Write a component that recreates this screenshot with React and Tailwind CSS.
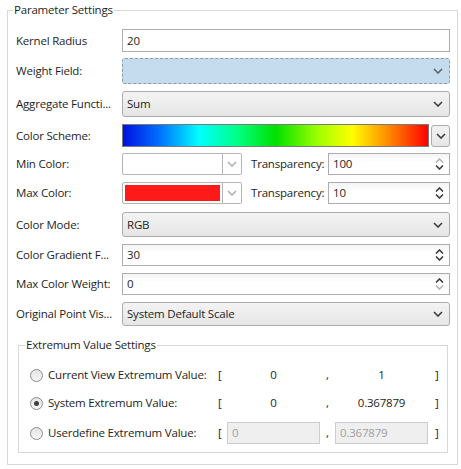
import React from 'react';

const font = { fontFamily: '"Open Sans", "Noto Sans", sans-serif' };

function Chevron({ className = 'text-[#3c3c3c]' }) {
  return (
    <svg width="10" height="6" viewBox="0 0 10 6" className={className}>
      <path d="M1 1 L5 5 L9 1" fill="none" stroke="currentColor" strokeWidth="1.6" />
    </svg>
  );
}

function SpinArrows({ upOff = false, downOff = false }) {
  return (
    <div className="flex flex-col items-center gap-[2px]">
      <svg width="9" height="5" viewBox="0 0 9 5" className={upOff ? 'text-[#b4b4b4]' : 'text-[#3c3c3c]'}>
        <path d="M1 4.5 L4.5 1 L8 4.5" fill="none" stroke="currentColor" strokeWidth="1.6" />
      </svg>
      <svg width="9" height="5" viewBox="0 0 9 5" className={downOff ? 'text-[#b4b4b4]' : 'text-[#3c3c3c]'}>
        <path d="M1 0.5 L4.5 4 L8 0.5" fill="none" stroke="currentColor" strokeWidth="1.6" />
      </svg>
    </div>
  );
}

function Row({ label, mt, h, children }) {
  return (
    <div className="flex items-center" style={{ marginTop: mt, height: h }}>
      <span className="w-[106px] shrink-0 whitespace-nowrap overflow-hidden text-[#1e1e1e]">{label}</span>
      <div className="flex-1 h-full flex items-center">{children}</div>
    </div>
  );
}

function TextBox({ value }) {
  return (
    <div className="w-full h-full border border-[#abadb3] bg-white flex items-center pl-[4px]">{value}</div>
  );
}

function Combo({ value, focused }) {
  return (
    <div
      className={
        focused
          ? 'w-full h-full rounded-[3px] border border-dashed border-[#8d9aa8] bg-[#c5dcee] flex items-center justify-between pl-[4px] pr-[6px]'
          : 'w-full h-full rounded-[3px] border border-[#acacac] bg-gradient-to-b from-[#f3f3f3] to-[#e6e6e6] flex items-center justify-between pl-[4px] pr-[6px]'
      }
    >
      <span>{value}</span>
      <Chevron className={focused ? 'text-[#5a6470]' : 'text-[#3c3c3c]'} />
    </div>
  );
}

function SpinBox({ value, upOff, downOff, className = 'w-full' }) {
  return (
    <div className={`${className} h-full border border-[#abadb3] bg-gradient-to-b from-[#f4f4f4] to-white to-[40%] flex items-center justify-between pl-[4px] pr-[5px]`}>
      <span>{value}</span>
      <SpinArrows upOff={upOff} downOff={downOff} />
    </div>
  );
}

function ColorPick({ color }) {
  return (
    <div className="flex h-full">
      <div className="w-[101px] h-full border border-[#b4b4b4] rounded-l-[2px] bg-white p-[2px]">
        <div className="w-full h-full" style={{ background: color }} />
      </div>
      <div className="w-[19px] h-full border border-l-0 border-[#b4b4b4] rounded-r-[2px] bg-white flex items-center justify-center">
        <Chevron className="text-[#b0b0b0]" />
      </div>
    </div>
  );
}

function Radio({ checked }) {
  return (
    <div className="w-[13px] h-[13px] rounded-full border border-[#8c8c8c] bg-gradient-to-b from-[#e4e4e4] to-[#f6f6f6] flex items-center justify-center">
      {checked && <div className="w-[5px] h-[5px] rounded-full bg-[#404040]" />}
    </div>
  );
}

function ExtRow({ label, checked, a, b, mt, disabled }) {
  return (
    <div className="flex items-center h-[22px]" style={{ marginTop: mt }}>
      <div className="w-[11px]" />
      <Radio checked={checked} />
      <span className="ml-[5px] w-[170px] whitespace-nowrap text-[#1e1e1e]">{label}</span>
      <span className="w-[9px] text-[#1e1e1e]">[</span>
      {disabled ? (
        <div className="w-[93px] h-full border border-[#cccccc] bg-[#efefef] text-[#a0a0a0] flex items-center pl-[4px]">{a}</div>
      ) : (
        <div className="w-[93px] text-center text-[#1e1e1e]">{a}</div>
      )}
      <span className="w-[15px] text-center text-[#1e1e1e]">,</span>
      {disabled ? (
        <div className="w-[93px] h-full border border-[#cccccc] bg-[#efefef] text-[#a0a0a0] flex items-center pl-[4px]">{b}</div>
      ) : (
        <div className="w-[93px] text-center text-[#1e1e1e]">{b}</div>
      )}
      <span className="ml-[7px] text-[#1e1e1e]">]</span>
    </div>
  );
}

export default function App() {
  return (
    <div className="w-[461px] h-[469px] bg-white text-[11.5px] tracking-[-0.2px] text-[#1e1e1e] overflow-hidden" style={font}>
      <div className="relative mt-[10px] ml-[7px] w-[451px] h-[455px] border border-[#d5d9dc] pl-[8px] pr-[7px] pt-[18px]">
        <span className="absolute -top-[10px] left-[5px] bg-white px-[1px] leading-[18px]">Parameter Settings</span>

        <Row label="Kernel Radius" mt={0} h={23}>
          <TextBox value="20" />
        </Row>
        <Row label="Weight Field:" mt={6} h={26}>
          <Combo value="" focused />
        </Row>
        <Row label="Aggregate Functi..." mt={7} h={26}>
          <Combo value="Sum" />
        </Row>
        <Row label="Color Scheme:" mt={7} h={23}>
          <div className="flex w-full h-full items-center gap-[2px]">
            <div className="flex-1 h-full border border-[#7a7a7a] bg-[linear-gradient(to_right,#0010e0_0%,#0070ff_12%,#00ffff_25%,#00ff80_38%,#00e000_50%,#a0ff00_64%,#ffff00_75%,#ff8000_88%,#ff0000_100%)]" />
            <div className="w-[19px] h-[22px] rounded-[3px] border border-[#acacac] bg-gradient-to-b from-[#f3f3f3] to-[#e6e6e6] flex items-center justify-center">
              <Chevron />
            </div>
          </div>
        </Row>
        <Row label="Min Color:" mt={6} h={22}>
          <ColorPick color="#ffffff" />
          <span className="ml-[9px] w-[77px] whitespace-nowrap">Transparency:</span>
          <SpinBox value="100" upOff className="flex-1" />
        </Row>
        <Row label="Max Color:" mt={7} h={22}>
          <ColorPick color="#ff1a1a" />
          <span className="ml-[9px] w-[77px] whitespace-nowrap">Transparency:</span>
          <SpinBox value="10" className="flex-1" />
        </Row>
        <Row label="Color Mode:" mt={8} h={25}>
          <Combo value="RGB" />
        </Row>
        <Row label="Color Gradient F..." mt={7} h={22}>
          <SpinBox value="30" />
        </Row>
        <Row label="Max Color Weight:" mt={7} h={22}>
          <SpinBox value="0" downOff />
        </Row>
        <Row label="Original Point Vis..." mt={7} h={24}>
          <Combo value="System Default Scale" />
        </Row>

        <div className="relative mt-[19px] ml-[2px] w-[430px] h-[108px] border border-[#d5d9dc] pt-[18px]">
          <span className="absolute -top-[10px] left-[6px] bg-white px-[1px] leading-[18px]">Extremum Value Settings</span>
          <ExtRow label="Current View Extremum Value:" a="0" b="1" mt={0} />
          <ExtRow label="System Extremum Value:" a="0" b="0.367879" checked mt={6} />
          <ExtRow label="Userdefine Extremum Value:" a="0" b="0.367879" mt={8} disabled />
        </div>
      </div>
    </div>
  );
}
